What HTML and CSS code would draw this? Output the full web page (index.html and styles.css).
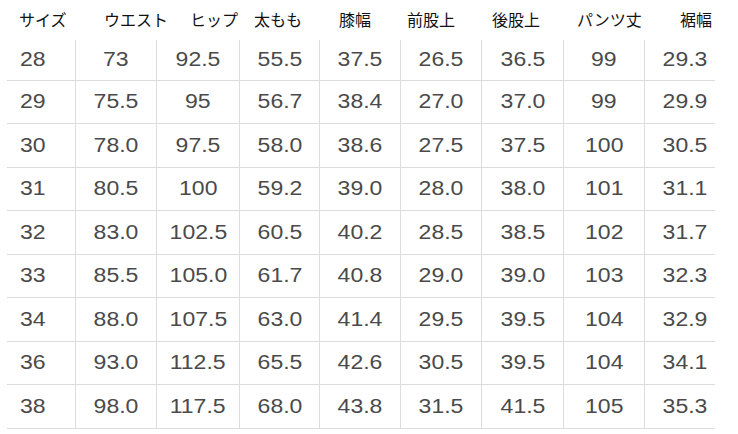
FILE: index.html
```html
<!DOCTYPE html>
<html lang="ja">
<head>
<meta charset="utf-8">
<title>サイズ表</title>
<link rel="stylesheet" href="styles.css">
</head>
<body>
<div class="size-chart">
  <div class="chart-head">
    <span>サイズ</span><span>ウエスト</span><span>ヒップ</span><span>太もも</span><span>膝幅</span><span>前股上</span><span>後股上</span><span>パンツ丈</span><span>裾幅</span>
  </div>
  <table class="chart-body">
    <colgroup>
      <col class="c1"><col class="c2"><col class="c3"><col class="c4"><col class="c5"><col class="c6"><col class="c7"><col class="c8"><col class="c9">
    </colgroup>
    <tbody>
      <tr class="first"><td><span>28</span></td><td><span>73</span></td><td><span>92.5</span></td><td><span>55.5</span></td><td><span>37.5</span></td><td><span>26.5</span></td><td><span>36.5</span></td><td><span>99</span></td><td><span>29.3</span></td></tr>
      <tr><td><span>29</span></td><td><span>75.5</span></td><td><span>95</span></td><td><span>56.7</span></td><td><span>38.4</span></td><td><span>27.0</span></td><td><span>37.0</span></td><td><span>99</span></td><td><span>29.9</span></td></tr>
      <tr><td><span>30</span></td><td><span>78.0</span></td><td><span>97.5</span></td><td><span>58.0</span></td><td><span>38.6</span></td><td><span>27.5</span></td><td><span>37.5</span></td><td><span>100</span></td><td><span>30.5</span></td></tr>
      <tr><td><span>31</span></td><td><span>80.5</span></td><td><span>100</span></td><td><span>59.2</span></td><td><span>39.0</span></td><td><span>28.0</span></td><td><span>38.0</span></td><td><span>101</span></td><td><span>31.1</span></td></tr>
      <tr><td><span>32</span></td><td><span>83.0</span></td><td><span>102.5</span></td><td><span>60.5</span></td><td><span>40.2</span></td><td><span>28.5</span></td><td><span>38.5</span></td><td><span>102</span></td><td><span>31.7</span></td></tr>
      <tr><td><span>33</span></td><td><span>85.5</span></td><td><span>105.0</span></td><td><span>61.7</span></td><td><span>40.8</span></td><td><span>29.0</span></td><td><span>39.0</span></td><td><span>103</span></td><td><span>32.3</span></td></tr>
      <tr><td><span>34</span></td><td><span>88.0</span></td><td><span>107.5</span></td><td><span>63.0</span></td><td><span>41.4</span></td><td><span>29.5</span></td><td><span>39.5</span></td><td><span>104</span></td><td><span>32.9</span></td></tr>
      <tr><td><span>36</span></td><td><span>93.0</span></td><td><span>112.5</span></td><td><span>65.5</span></td><td><span>42.6</span></td><td><span>30.5</span></td><td><span>39.5</span></td><td><span>104</span></td><td><span>34.1</span></td></tr>
      <tr><td><span>38</span></td><td><span>98.0</span></td><td><span>117.5</span></td><td><span>68.0</span></td><td><span>43.8</span></td><td><span>31.5</span></td><td><span>41.5</span></td><td><span>105</span></td><td><span>35.3</span></td></tr>
    </tbody>
  </table>
</div>
</body>
</html>
```
FILE: styles.css
```css
html, body {
  margin: 0;
  padding: 0;
  background: #ffffff;
}

.size-chart {
  width: 738px;
}

.chart-head {
  display: grid;
  grid-template-columns: 85px 86px 64px 85px 68px 85px 85px 103px auto;
  height: 40px;
  align-items: center;
  padding-left: 19px;
  font-family: "Noto Sans CJK JP", "Noto Sans", sans-serif;
  font-size: 16px;
  line-height: 1;
  color: #111111;
  white-space: nowrap;
}

.chart-head span {
  position: relative;
  top: -1px;
}

.chart-body {
  margin-left: 7px;
  width: 708px;
  table-layout: fixed;
  border-collapse: separate;
  border-spacing: 0;
  font-family: "Liberation Sans", Arial, sans-serif;
  font-size: 19.5px;
  color: #4a4a4a;
}

.c1 { width: 68px; }
.c2 { width: 81px; }
.c3 { width: 83px; }
.c4 { width: 80px; }
.c5 { width: 81px; }
.c6 { width: 81px; }
.c7 { width: 82px; }
.c8 { width: 81px; }
.c9 { width: 71px; }

.chart-body tr {
  height: 43.5px;
}

.chart-body tr.first {
  height: 40.5px;
}

.chart-body td {
  padding: 0;
  text-align: center;
  vertical-align: middle;
  border-bottom: 1px solid #dcdcdc;
  border-left: 1px solid #dcdcdc;
  line-height: 1;
}

.chart-body td:first-child {
  border-left: none;
  text-align: left;
  padding-left: 13px;
}

.chart-body td:last-child {
  padding-left: 10px;
}

.chart-body td span {
  display: inline-block;
  transform: scaleX(1.18);
}

.chart-body td:first-child span {
  transform-origin: left center;
}
```
